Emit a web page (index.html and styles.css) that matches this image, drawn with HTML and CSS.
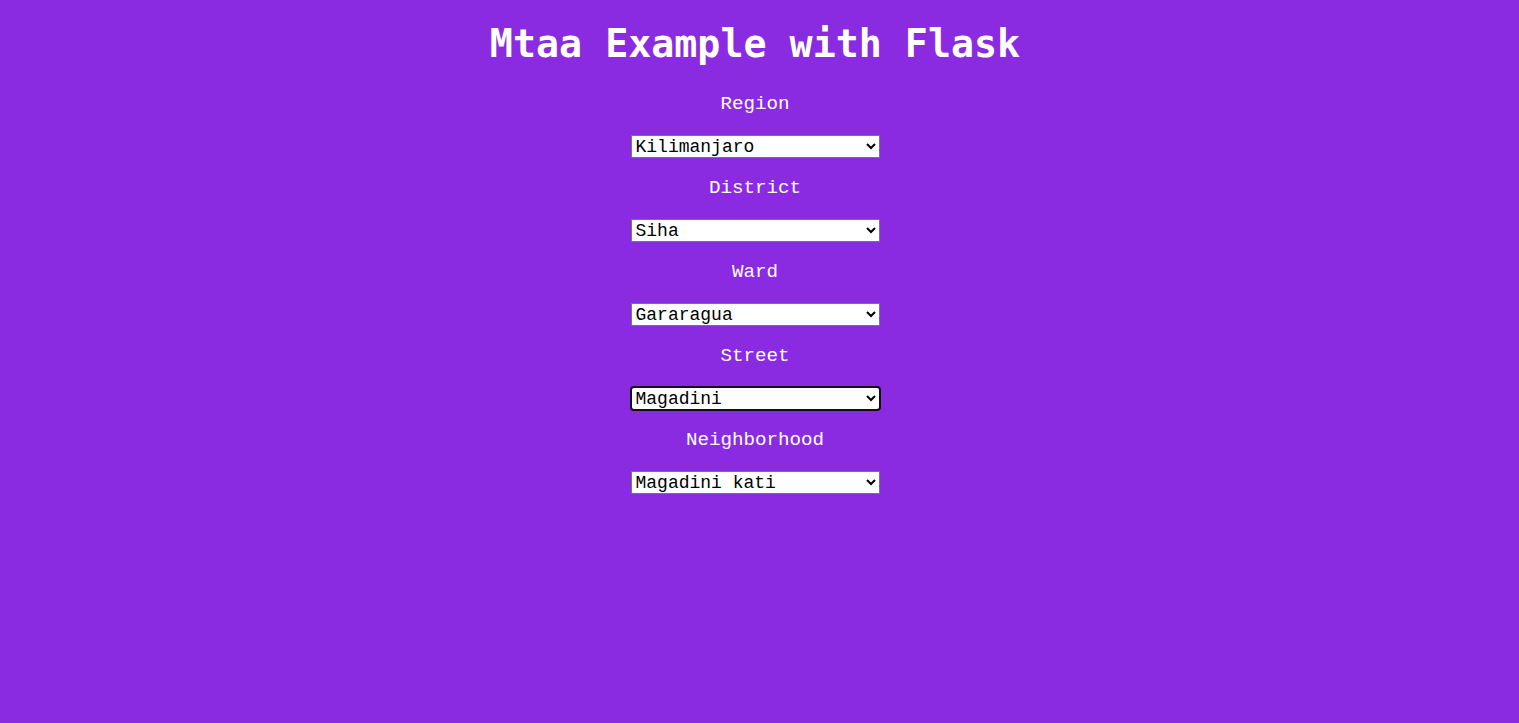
FILE: index.html
```html
<!DOCTYPE html>
<html lang="en">
<head>
<meta charset="utf-8">
<title>Mtaa Example with Flask</title>
<link rel="stylesheet" href="styles.css">
</head>
<body>
<main class="page">
  <h1 class="title">Mtaa Example with Flask</h1>
  <form class="form">
    <div class="field">
      <label class="label" for="region">Region</label>
      <select class="select" id="region"><option>Kilimanjaro</option></select>
    </div>
    <div class="field">
      <label class="label" for="district">District</label>
      <select class="select" id="district"><option>Siha</option></select>
    </div>
    <div class="field">
      <label class="label" for="ward">Ward</label>
      <select class="select" id="ward"><option>Gararagua</option></select>
    </div>
    <div class="field">
      <label class="label" for="street">Street</label>
      <select class="select select-focused" id="street"><option>Magadini</option></select>
    </div>
    <div class="field">
      <label class="label" for="neighborhood">Neighborhood</label>
      <select class="select" id="neighborhood"><option>Magadini kati</option></select>
    </div>
  </form>
</main>
</body>
</html>
```
FILE: styles.css
```css
html {
  background: #e8e8e8;
}
body {
  margin: 0;
}
.page {
  height: 723px;
  background: #8a2be2;
  color: #ffffff;
  font-family: "Liberation Mono", monospace;
  display: flex;
  flex-direction: column;
  align-items: center;
  padding: 22px 9px 0 0;
  box-sizing: border-box;
}
.title {
  margin: 0 0 27px 0;
  font-family: "DejaVu Sans Mono", monospace;
  font-size: 38.3px;
  line-height: 44px;
  font-weight: bold;
}
.form {
  display: flex;
  flex-direction: column;
  align-items: center;
  gap: 19px;
}
.field {
  display: flex;
  flex-direction: column;
  align-items: center;
  gap: 20px;
}
.label {
  font-size: 19.2px;
  line-height: 22px;
  height: 22px;
}
.select {
  width: 249px;
  height: 23px;
  box-sizing: border-box;
  margin: 0;
  padding: 0;
  font-family: "Liberation Mono", monospace;
  font-size: 18px;
  color: #000;
  background: #ffffff;
  border: 1px solid #767676;
  border-radius: 0;
  outline: none;
}
.select-focused {
  border-color: #ffffff;
  border-radius: 3px;
  outline: 2px solid #101010;
  outline-offset: -1px;
}
```
